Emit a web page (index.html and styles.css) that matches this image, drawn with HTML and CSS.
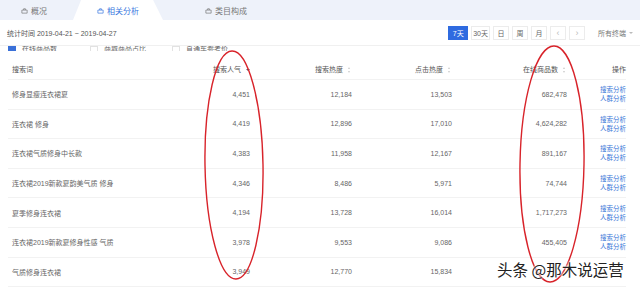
FILE: index.html
```html
<!DOCTYPE html>
<html lang="zh-CN">
<head>
  <meta charset="UTF-8" />
  <title>相关分析</title>
  <link rel="stylesheet" href="styles.css">
</head>
<body>
  <div class="tabs">
    <div class="tab tab-first"><svg class="ticon" viewBox="0 0 8 7"><path d="M1 3h6v3.5H1z M3 3V1.5h2V3" /></svg>概况</div>
    <div class="tab tab-active"><svg class="ticon" viewBox="0 0 8 7"><path d="M1 3h6v3.5H1z M3 3V1.5h2V3" /></svg>相关分析</div>
    <div class="tab"><svg class="ticon" viewBox="0 0 8 7"><path d="M1 3h6v3.5H1z M3 3V1.5h2V3" /></svg>类目构成</div>
  </div>

  <div class="toolbar">
    <span class="range">统计时间 2019-04-21 ~ 2019-04-27</span>
    <div class="periods">
      <span class="pbtn on">7天</span>
      <span class="pbtn">30天</span>
      <span class="pbtn">日</span>
      <span class="pbtn">周</span>
      <span class="pbtn">月</span>
      <span class="pbtn arrow">&lsaquo;</span>
      <span class="pbtn arrow">&rsaquo;</span>
      <span class="device">所有终端 <i class="caret"></i></span>
    </div>
  </div>

  <div class="checks">
    <label class="chk"><span class="box checked"></span>在线商品数</label>
    <label class="chk"><span class="box"></span>商城商品占比</label>
    <label class="chk"><span class="box"></span>直通车参考价</label>
  </div>

  <div class="table">
    <div class="row head">
      <span class="c-word">搜索词</span>
      <span class="num">搜索人气 <i class="sort-down"></i></span>
      <span class="num">搜索热度 <i class="sort"></i></span>
      <span class="num">点击热度 <i class="sort"></i></span>
      <span class="num">在线商品数 <i class="sort"></i></span>
      <span class="num">操作</span>
    </div>
    <div class="row">
      <span class="c-word">修身显瘦连衣裙夏</span>
      <span class="num">4,451</span><span class="num">12,184</span><span class="num">13,503</span><span class="num">682,478</span>
      <span class="ops"><a>搜索分析</a><a>人群分析</a></span>
    </div>
    <div class="row">
      <span class="c-word">连衣裙 修身</span>
      <span class="num">4,419</span><span class="num">12,896</span><span class="num">17,010</span><span class="num">4,624,282</span>
      <span class="ops"><a>搜索分析</a><a>人群分析</a></span>
    </div>
    <div class="row">
      <span class="c-word">连衣裙气质修身中长款</span>
      <span class="num">4,383</span><span class="num">11,958</span><span class="num">12,167</span><span class="num">891,167</span>
      <span class="ops"><a>搜索分析</a><a>人群分析</a></span>
    </div>
    <div class="row">
      <span class="c-word">连衣裙2019新款夏韵美气质 修身</span>
      <span class="num">4,346</span><span class="num">8,486</span><span class="num">5,971</span><span class="num">74,744</span>
      <span class="ops"><a>搜索分析</a><a>人群分析</a></span>
    </div>
    <div class="row">
      <span class="c-word">夏季修身连衣裙</span>
      <span class="num">4,194</span><span class="num">13,728</span><span class="num">16,014</span><span class="num">1,717,273</span>
      <span class="ops"><a>搜索分析</a><a>人群分析</a></span>
    </div>
    <div class="row">
      <span class="c-word">连衣裙2019新款夏修身性感 气质</span>
      <span class="num">3,978</span><span class="num">9,553</span><span class="num">9,086</span><span class="num">455,405</span>
      <span class="ops"><a>搜索分析</a><a>人群分析</a></span>
    </div>
    <div class="row">
      <span class="c-word">气质修身连衣裙</span>
      <span class="num">3,949</span><span class="num">12,770</span><span class="num">15,834</span><span class="num"></span>
      <span class="ops"></span>
    </div>
  </div>

  <svg class="marks" viewBox="0 0 640 287" width="640" height="287">
    <ellipse cx="234" cy="165" rx="29" ry="114" transform="rotate(-1 234 165)" />
    <ellipse cx="552" cy="164" rx="32" ry="118" transform="rotate(1 552 164)" />
  </svg>

  <div class="watermark">头条 @那木说运营</div>
</body>
</html>
```

FILE: styles.css
```css
body {
  margin: 0;
  width: 640px;
  height: 287px;
  overflow: hidden;
  position: relative;
  background: #fff;
  font-family: "Liberation Sans", "Noto Sans CJK SC", sans-serif;
  font-size: 7px;
  color: #666;
}

.tabs {
  height: 20px;
  background: #eef2fa;
  display: flex;
  align-items: center;
}

.tab {
  display: flex;
  align-items: center;
  gap: 3px;
  color: #777;
  font-size: 8px;
  height: 20px;
  width: 90px;
  justify-content: center;
}

.tab-first {
  justify-content: flex-start;
  padding-left: 21px;
  width: 52px;
}

.tab-active {
  background: #fff;
  color: #3a77e0;
  width: 90px;
  clip-path: polygon(9% 0, 89% 0, 100% 100%, 0 100%);
  margin-right: 18px;
}

.ticon {
  width: 7px;
  height: 7px;
  fill: none;
  stroke: currentColor;
  stroke-width: 0.8;
}

.toolbar {
  height: 25px;
  padding: 0 7px;
  display: flex;
  align-items: center;
  justify-content: space-between;
  border-bottom: 1px solid #f0f0f0;
}

.range {
  color: #555;
}

.periods {
  display: flex;
  align-items: center;
  gap: 3px;
}

.pbtn {
  height: 12px;
  min-width: 12px;
  padding: 0 1px;
  border: 1px solid #ececec;
  display: flex;
  align-items: center;
  justify-content: center;
  color: #666;
}

.pbtn.on {
  background: #2f6be0;
  border-color: #2f6be0;
  color: #fff;
  min-width: 16px;
}

.pbtn.arrow {
  color: #bbb;
  font-size: 9px;
}

.device {
  margin-left: 10px;
  color: #777;
  display: flex;
  align-items: center;
  gap: 3px;
}

.caret {
  width: 0;
  height: 0;
  border-left: 2.5px solid transparent;
  border-right: 2.5px solid transparent;
  border-top: 2.5px solid #bbb;
}

.checks {
  height: 5px;
  overflow: hidden;
  display: flex;
  padding-left: 8px;
}

.chk {
  width: 82px;
  display: flex;
  align-items: flex-start;
  gap: 6px;
  color: #666;
  line-height: 8px;
  margin-top: -1px;
}

.box {
  width: 6px;
  height: 6px;
  border: 1px solid #e2e2e2;
  margin-top: 1px;
}

.box.checked {
  background: #3a70d8;
  border-color: #3a70d8;
}

.table {
  width: 618px;
  margin: 7px 0 0 8px;
}

.row {
  display: grid;
  grid-template-columns: 162px 76px 102px 100px 115px 59px;
  padding: 0 2px 0 4px;
  height: 29.6px;
  align-items: center;
  border-bottom: 1px solid #f2f2f2;
  box-sizing: border-box;
}

.row.head {
  height: 22px;
  color: #555;
}

.c-word {
  white-space: nowrap;
}

.num {
  text-align: right;
  white-space: nowrap;
}

.sort, .sort-down {
  display: inline-block;
  vertical-align: middle;
  width: 5px;
  height: 6px;
  margin-left: 2px;
  position: relative;
}

.sort::before, .sort::after {
  content: "";
  position: absolute;
  left: 1px;
  border-left: 1.5px solid transparent;
  border-right: 1.5px solid transparent;
}

.sort::before {
  top: 0;
  border-bottom: 2px solid #ccc;
}

.sort::after {
  bottom: 0;
  border-top: 2px solid #ccc;
}

.sort-down::after {
  content: "";
  position: absolute;
  left: 1px;
  top: 2px;
  border-left: 2px solid transparent;
  border-right: 2px solid transparent;
  border-top: 2.5px solid #556;
}

.ops {
  display: flex;
  flex-direction: column;
  align-items: flex-end;
  font-size: 6.5px;
  line-height: 9px;
}

.ops a {
  color: #3b78d8;
}

.marks {
  position: absolute;
  left: 0;
  top: 0;
  pointer-events: none;
}

.marks ellipse {
  fill: none;
  stroke: #d8232a;
  stroke-width: 1.4;
}

.watermark {
  position: absolute;
  left: 497px;
  top: 258px;
  font-family: "Noto Sans CJK SC", sans-serif;
  font-size: 15.5px;
  color: #222;
  text-shadow: 0 0 2px #fff, 0 0 2px #fff, 0 0 3px #fff;
}
```
